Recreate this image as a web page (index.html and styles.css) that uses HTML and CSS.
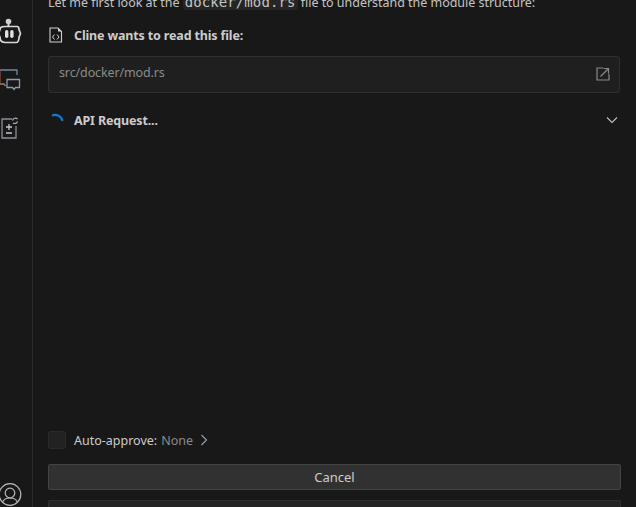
FILE: index.html
```html
<!DOCTYPE html>
<html lang="en">
<head>
    <meta charset="UTF-8">
    <title>Cline</title>
    <link rel="stylesheet" href="styles.css">
</head>
<body>
<div class="app">
    <div class="sidebar">
        <svg class="side-icon icon-robot" width="24" height="28" viewBox="0 0 24 28" fill="none">
            <circle cx="8.500" cy="4.500" r="2.800" fill="#d0d0d0"/>
            <path d="M8.500 6v3" stroke="#d0d0d0" stroke-width="2"/>
            <path d="M5 9.500h12c1.500 0 2 1.500 2 3l1.500 4-1.500 4c0 2-1 5-3 5H5c-3 0-5-2-5-5l-1.500-4 1.500-4c0-2 2-3 5-3z" stroke="#d8d8d8" stroke-width="1.700"/>
            <rect x="5" y="13" width="3.400" height="8" rx="1.700" fill="#e0e0e0"/>
            <rect x="10.200" y="13" width="3.400" height="8" rx="1.700" fill="#e0e0e0"/>
        </svg>
        <svg class="side-icon icon-chat" width="22" height="22" viewBox="0 0 22 22" fill="none">
            <path d="M0 1h17v5" stroke="#6d88a0" stroke-width="1.300"/>
            <path d="M0 1v13" stroke="#8a4a40" stroke-width="1.300"/>
            <path d="M0 15h4l1.500 2" stroke="#a08060" stroke-width="1.300"/>
            <path d="M7 10.500h12.500v8h-4l-1.500 2-1.500-2H7z" stroke="#8a9cae" stroke-width="1.300"/>
        </svg>
        <svg class="side-icon icon-task" width="18" height="22" viewBox="0 0 18 22" fill="none">
            <path d="M11 2H1v19h14V9" stroke="#8a9098" stroke-width="1.300"/>
            <path d="M5 10h6M8 7v6M5 16h6" stroke="#c8c8c8" stroke-width="1.300"/>
            <path d="M11.500 3.500a3 3 0 0 1 5-1.500M16.500 4.500a3 3 0 0 1-4.500 1.500" stroke="#b0b0b0" stroke-width="1.200"/>
        </svg>
        <div class="side-spacer"></div>
        <svg class="side-icon icon-user" width="22" height="24" viewBox="0 0 22 24" fill="none">
            <circle cx="10" cy="11.500" r="10.800" stroke="#b8b8b8" stroke-width="1.200"/>
            <circle cx="10" cy="10" r="4.800" stroke="#b8b8b8" stroke-width="1.200"/>
            <path d="M2.500 19.500c1-3.500 4-4.500 7.500-4.500s6.500 1 7.500 4.500" stroke="#b8b8b8" stroke-width="1.200"/>
        </svg>
    </div>

    <div class="main">
        <div class="chat">
            <p class="intro">Let me first look at the <code>docker/mod.rs</code> file to understand the module structure:</p>

            <div class="tool-head">
                <svg class="file-icon" width="14" height="16" viewBox="0 0 14 16" fill="none">
                    <path d="M1 1h8l3.500 3.500V15H1z" stroke="#d0d0d0" stroke-width="1.100"/>
                    <path d="M9 1v3.500h3.500" fill="#d0d0d0"/>
                    <path d="M5.500 7.500 3.500 10l2 2.500M8 7.500l2 2.500-2 2.500" stroke="#d0d0d0" stroke-width="1"/>
                </svg>
                <span class="tool-title">Cline wants to read this file:</span>
            </div>

            <div class="path-box">
                <span class="path-text">src/docker/mod.rs</span>
                <svg class="open-icon" width="14" height="14" viewBox="0 0 14 14" fill="none">
                    <path d="M7 1H1v12h12V7" stroke="#8a8a8a" stroke-width="1.200"/>
                    <path d="M4.500 9.500 12 2M7.500 1.500h5v5" stroke="#8a8a8a" stroke-width="1.200"/>
                </svg>
            </div>

            <div class="api-row">
                <svg class="spinner" width="16" height="16" viewBox="0 0 16 16" fill="none">
                    <path d="M2 2.600C6 .8 11 2.500 12.500 8" stroke="#0e7ad1" stroke-width="2.100"/>
                </svg>
                <span class="tool-title">API Request...</span>
                <svg class="chevron-down" width="12" height="8" viewBox="0 0 12 8" fill="none">
                    <path d="M1 1.500 6 6.500l5-5" stroke="#c0c0c0" stroke-width="1.100"/>
                </svg>
            </div>
        </div>

        <div class="footer">
            <div class="approve-row">
                <span class="checkbox"></span>
                <span class="approve-label">Auto-approve:</span>
                <span class="approve-value">None</span>
                <svg width="8" height="12" viewBox="0 0 8 12" fill="none">
                    <path d="M1.500 1 6.500 6l-5 5" stroke="#a0a0a0" stroke-width="1.100"/>
                </svg>
            </div>
            <div class="btn">Cancel</div>
            <div class="btn-next"></div>
        </div>
    </div>
</div>
</body>
</html>
```

FILE: styles.css
```css
* {
    margin: 0;
    padding: 0;
    box-sizing: border-box;
}

html, body {
    height: 100%;
    overflow: hidden;
}

body {
    background-color: #181818;
    color: #cccccc;
    font-family: "Noto Sans", sans-serif;
    font-size: 12.5px;
}

.app {
    display: flex;
    height: 507px;
    overflow: hidden;
}

.sidebar {
    width: 33px;
    flex-shrink: 0;
    border-right: 1px solid #2b2b2b;
    display: flex;
    flex-direction: column;
    overflow: hidden;
}

.side-icon {
    display: block;
    overflow: visible;
    flex-shrink: 0;
}

.icon-robot {
    margin-top: 17px;
}

.icon-chat {
    margin-top: 24px;
}

.icon-task {
    margin-top: 26px;
    margin-left: 1px;
}

.side-spacer {
    flex: 1;
}

.main {
    flex: 1;
    padding: 0 15px;
    display: flex;
    flex-direction: column;
    min-width: 0;
}

.chat {
    flex: 1;
    margin-right: 1px;
}

.intro {
    height: 24px;
    margin-top: -8px;
    line-height: 20px;
    white-space: nowrap;
    color: #c4c4c4;
    letter-spacing: -0.03px;
}

code {
    font-family: "DejaVu Sans Mono", monospace;
    font-size: 14px;
    letter-spacing: 0.1px;
    background-color: #252525;
    border-radius: 3px;
    padding: 0 2px;
}

.tool-head {
    display: flex;
    align-items: center;
    margin-top: 9px;
    height: 20px;
}

.file-icon {
    margin-left: 1px;
    margin-right: 11px;
    flex-shrink: 0;
}

.tool-title {
    font-weight: 700;
    letter-spacing: -0.15px;
    color: #cccccc;
}

.path-box {
    display: flex;
    align-items: center;
    justify-content: space-between;
    height: 37px;
    margin-top: 11px;
    padding: 0 9px 4px 10px;
    background-color: #1f1f1f;
    border: 1px solid #2f2f2f;
    border-radius: 3px;
}

.path-text {
    color: #8b8b8b;
    letter-spacing: -0.12px;
}

.open-icon {
    margin-top: 2px;
}

.api-row {
    display: flex;
    align-items: center;
    margin-top: 17px;
    height: 20px;
    padding-right: 2px;
}

.spinner {
    margin-left: 2px;
    margin-top: 2px;
    margin-right: 8px;
    flex-shrink: 0;
}

.chevron-down {
    margin-left: auto;
}

.footer {
    flex-shrink: 0;
}

.approve-row {
    display: flex;
    align-items: center;
    height: 18px;
    margin-bottom: -1px;
    position: relative;
    top: -1px;
}

.checkbox {
    width: 18px;
    height: 18px;
    background-color: #222222;
    border: 1px solid #2b2b2b;
    border-radius: 3px;
    margin-right: 8px;
}

.approve-label {
    color: #cccccc;
    margin-right: 4px;
}

.approve-value {
    color: #8b8b8b;
    margin-right: 7px;
}

.btn {
    height: 26px;
    margin-top: 15px;
    background-color: #313131;
    border: 1px solid #444444;
    border-radius: 2px;
    color: #cccccc;
    text-align: center;
    line-height: 24px;
    font-size: 13px;
}

.btn-next {
    height: 7px;
    margin-top: 10px;
    background-color: #242424;
    border: 1px solid #2f2f2f;
    border-bottom: 0;
    border-radius: 2px 2px 0 0;
}
```
